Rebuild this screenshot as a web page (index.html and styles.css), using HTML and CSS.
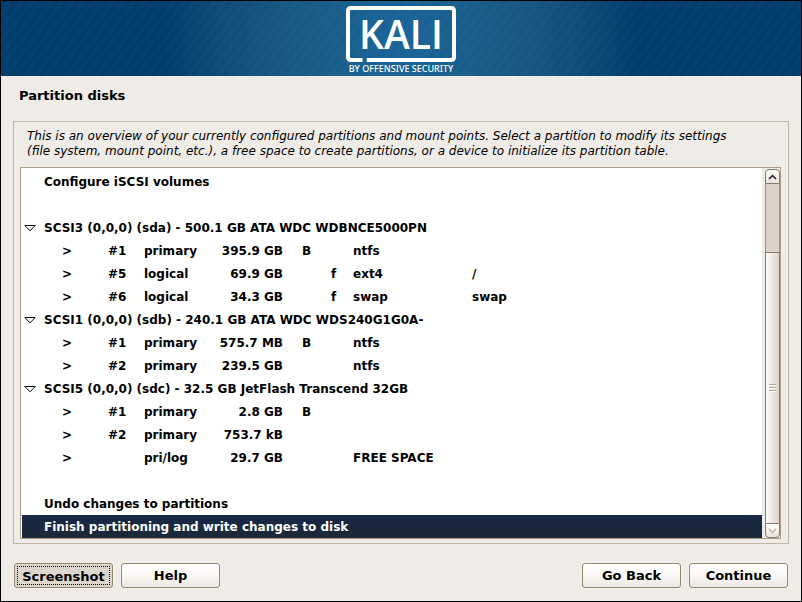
FILE: index.html
```
<!DOCTYPE html>
<html lang="en">
<head>
<meta charset="utf-8">
<title>Partition disks</title>
<link rel="stylesheet" href="styles.css">
</head>
<body>
<header class="banner">
  <svg class="logo" width="112" height="69" viewBox="0 0 112 69" role="img" aria-label="Kali by Offensive Security">
    <path d="M17.500 54H6Q3 54 3 51V5Q3 2 6 2H106Q109 2 109 5V51Q109 54 106 54H21.700" fill="none" stroke="#fff" stroke-width="4"/>
    <text class="logo-name" x="56" y="43" text-anchor="middle">KALI</text>
    <text class="logo-tag" x="56" y="66" text-anchor="middle">BY OFFENSIVE SECURITY</text>
  </svg>
</header>
<main class="content">
  <h1 class="title">Partition disks</h1>
  <section class="panel">
    <p class="intro">This is an overview of your currently configured partitions and mount points. Select a partition to modify its settings (file system, mount point, etc.), a free space to create partitions, or a device to initialize its partition table.</p>
    <div class="list">
      <div class="rows">
        <table class="tree">
          <colgroup><col class="c-toggle"><col class="c-mark"><col class="c-num"><col class="c-type"><col class="c-size"><col class="c-boot"><col class="c-use"><col class="c-fs"><col class="c-mount"></colgroup>
          <tbody>
            <tr><td></td><td colspan="8">Configure iSCSI volumes</td></tr>
            <tr><td colspan="9"></td></tr>
            <tr><td class="toggle"><svg width="12" height="8" viewBox="0 0 12 8"><path d="M0.800 1.500H11.200L6 6.800Z"/></svg></td><th colspan="8">SCSI3 (0,0,0) (sda) - 500.1 GB ATA WDC WDBNCE5000PN</th></tr>
            <tr><td></td><td class="mark">&gt;</td><td>#1</td><td>primary</td><td class="size">395.9 GB</td><td class="boot">B</td><td></td><td>ntfs</td><td></td></tr>
            <tr><td></td><td class="mark">&gt;</td><td>#5</td><td>logical</td><td class="size">69.9 GB</td><td></td><td>f</td><td>ext4</td><td>/</td></tr>
            <tr><td></td><td class="mark">&gt;</td><td>#6</td><td>logical</td><td class="size">34.3 GB</td><td></td><td>f</td><td>swap</td><td>swap</td></tr>
            <tr><td class="toggle"><svg width="12" height="8" viewBox="0 0 12 8"><path d="M0.800 1.500H11.200L6 6.800Z"/></svg></td><th colspan="8">SCSI1 (0,0,0) (sdb) - 240.1 GB ATA WDC WDS240G1G0A-</th></tr>
            <tr><td></td><td class="mark">&gt;</td><td>#1</td><td>primary</td><td class="size">575.7 MB</td><td class="boot">B</td><td></td><td>ntfs</td><td></td></tr>
            <tr><td></td><td class="mark">&gt;</td><td>#2</td><td>primary</td><td class="size">239.5 GB</td><td></td><td></td><td>ntfs</td><td></td></tr>
            <tr><td class="toggle"><svg width="12" height="8" viewBox="0 0 12 8"><path d="M0.800 1.500H11.200L6 6.800Z"/></svg></td><th colspan="8">SCSI5 (0,0,0) (sdc) - 32.5 GB JetFlash Transcend 32GB</th></tr>
            <tr><td></td><td class="mark">&gt;</td><td>#1</td><td>primary</td><td class="size">2.8 GB</td><td class="boot">B</td><td></td><td></td><td></td></tr>
            <tr><td></td><td class="mark">&gt;</td><td>#2</td><td>primary</td><td class="size">753.7 kB</td><td></td><td></td><td></td><td></td></tr>
            <tr><td></td><td class="mark">&gt;</td><td></td><td>pri/log</td><td class="size">29.7 GB</td><td></td><td></td><td>FREE SPACE</td><td></td></tr>
            <tr><td colspan="9"></td></tr>
            <tr><td></td><td colspan="8">Undo changes to partitions</td></tr>
            <tr class="selected"><td></td><td colspan="8">Finish partitioning and write changes to disk</td></tr>
          </tbody>
        </table>
      </div>
      <div class="scrollbar">
        <button class="step step-up" type="button" aria-label="Scroll up"><svg width="9" height="6" viewBox="0 0 9 6"><path d="M1 5L4.500 1.500L8 5"/></svg></button>
        <div class="trough"></div>
        <div class="thumb"><span class="grip"></span></div>
        <button class="step step-down" type="button" aria-label="Scroll down" disabled><svg width="9" height="6" viewBox="0 0 9 6"><path d="M1 1L4.500 4.500L8 1"/></svg></button>
      </div>
    </div>
  </section>
  <footer class="actions">
    <button class="btn pressed" type="button">Screenshot</button>
    <button class="btn" type="button">Help</button>
    <span class="spacer"></span>
    <button class="btn" type="button">Go Back</button>
    <button class="btn" type="button">Continue</button>
  </footer>
</main>
</body>
</html>
```
FILE: styles.css
```
* {
  box-sizing: border-box;
}

body {
  margin: 0;
  min-height: 100vh;
  display: flex;
  flex-direction: column;
  border: 1px solid #000;
  background: #efebe7;
  color: #000;
  font-family: "DejaVu Sans", sans-serif;
  font-size: 12px;
  line-height: 15px;
}

.banner {
  display: flex;
  justify-content: center;
  padding: 5px 0 1px;
  background:
    repeating-linear-gradient(128deg, rgba(255, 255, 255, 0.02) 0 2px, rgba(255, 255, 255, 0) 4px 6px, rgba(255, 255, 255, 0.02) 8px),
    radial-gradient(circle 240px at 50% 50%, #19649a 0, #195f8d 60px, #17567f 130px, #0c4a76 190px, #003c6c 240px);
}

.logo {
  display: block;
}

.logo text {
  fill: #fff;
}

.logo-name {
  font-family: "Open Sans", sans-serif;
  font-size: 39px;
  font-weight: 600;
}

.logo-tag {
  font-family: "Noto Sans", sans-serif;
  font-size: 9px;
  font-weight: 500;
}

.content {
  flex: 1;
  display: flex;
  flex-direction: column;
  padding: 12px;
}

.title {
  margin: 0 6px 18px;
  font-size: 13px;
  line-height: 15px;
}

.panel {
  flex: 1;
  display: flex;
  flex-direction: column;
  padding: 7px 7px 4px 6px;
  border: 1px solid #c0b4a4;
}

.intro {
  margin: 0 32px 8px 7px;
  font-style: italic;
}

.list {
  flex: 1;
  display: flex;
  border: 1px solid #ab9b88;
}

.rows {
  flex: 1;
  padding: 2px 0 0 1px;
  background: #fff;
}

.tree {
  width: 100%;
  table-layout: fixed;
  border-collapse: collapse;
  font-weight: bold;
}

.c-toggle { width: 22px; }
.c-mark { width: 64px; }
.c-num { width: 36px; }
.c-type { width: 69px; }
.c-size { width: 70px; }
.c-boot { width: 48px; }
.c-use { width: 22px; }
.c-fs { width: 119px; }

.tree td,
.tree th {
  height: 23px;
  padding: 2px 0 0;
  text-align: left;
  white-space: nowrap;
}

.tree .toggle {
  padding: 0 0 0 2px;
}

.toggle svg {
  display: block;
  fill: none;
  stroke: #000;
}

.tree .mark {
  padding-left: 18px;
}

.tree .size {
  text-align: right;
}

.tree .boot {
  padding-left: 19px;
}

.selected {
  background: linear-gradient(#182848, #1b2936);
  color: #fff;
}

.scrollbar {
  width: 18px;
  display: flex;
  flex-direction: column;
  padding: 1px 0 0 3px;
}

.step {
  height: 15px;
  padding: 0;
  display: flex;
  align-items: center;
  justify-content: center;
  border: 1px solid #857a6c;
  background: linear-gradient(#fff, #e9e2dd);
}

.step svg {
  fill: none;
  stroke: #222;
  stroke-width: 1.5;
}

.step-up {
  border-radius: 4px 4px 0 0;
}

.step-down {
  border-radius: 0 0 4px 4px;
}

.step-down svg {
  stroke: #bbb2ab;
}

.trough {
  flex: 68;
  border: solid #9c8f7e;
  border-width: 0 1px;
  background: #ddd2c7;
}

.thumb {
  flex: 271;
  display: flex;
  align-items: center;
  justify-content: center;
  border: solid #857a6c;
  border-width: 1px 1px 0;
  background: linear-gradient(90deg, #fff, #eee6e2 50%, #ded3cb);
}

.grip {
  width: 7px;
  height: 8px;
  background: repeating-linear-gradient(#b9a893 0 1px, #fff 1px 2px, transparent 2px 3px);
}

.actions {
  display: flex;
  gap: 8px;
  padding: 19px 1px 1px;
}

.spacer {
  flex: 1;
}

.btn {
  min-width: 99px;
  height: 25px;
  padding: 0 6px;
  border: 1px solid #93866f;
  border-radius: 3px;
  background: linear-gradient(#fff, #fbf8f7 50%, #ebe6e1);
  box-shadow: 0 0 0 1px #f5f2ef;
  color: #000;
  font: bold 13px/15px "DejaVu Sans", sans-serif;
}

.pressed {
  padding: 2px 6px 0;
  background: #ddd6cd;
  outline: 1px dotted #000;
  outline-offset: -4px;
}
```
